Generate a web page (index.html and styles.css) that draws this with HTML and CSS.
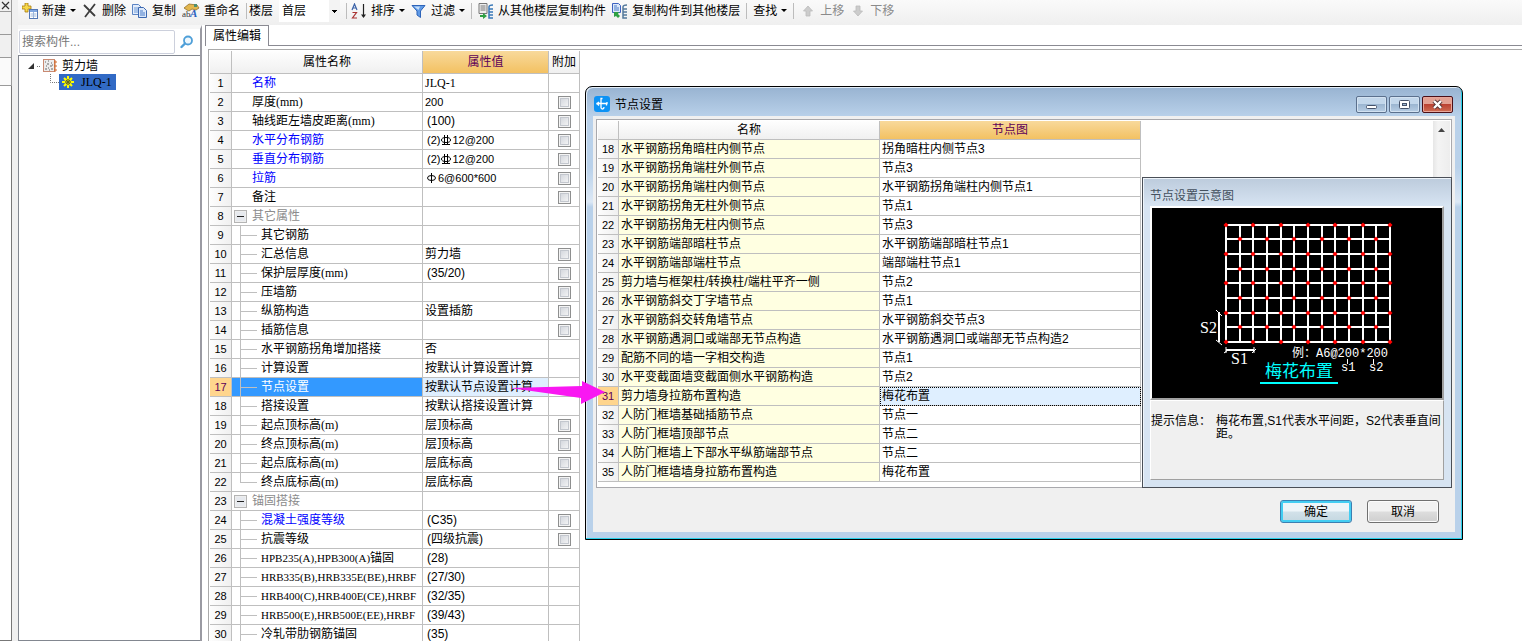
FILE: index.html
```html
<!DOCTYPE html>
<html lang="zh-CN">
<head>
<meta charset="utf-8">
<title>属性编辑</title>
<link rel="stylesheet" href="styles.css">
</head>
<body>
<div class="app">
  <aside class="strip">
    <button class="strip-close" aria-label="关闭"><svg width="9" height="9" viewBox="0 0 9 9"><path d="M1 1l7 7M8 1L1 8" stroke="#333" stroke-width="1.2"/></svg></button>
    <div class="strip-row"></div>
    <div class="strip-row"></div>
    <div class="strip-tab"></div>
    <div class="strip-body"></div>
  </aside>
  <div class="main">
    <div class="toolbar">
      <button class="tool"><svg width="16" height="16" viewBox="0 0 16 16"><path d="M3 0h3v3h3v3H6v3H3V6H0V3h3z" fill="#f6d84a" stroke="#a87b10" stroke-width=".8"/><rect x="7.5" y="6.500" width="8" height="9" fill="#fff" stroke="#5277b5"/><path d="M8 7h7v2H8z" fill="#7fa6e0"/><path d="M8.500 11h6M8.500 13h6M11.500 9v6" stroke="#9db7dc"/></svg><span>新建</span><i class="caret"></i></button>
      <button class="tool"><svg width="16" height="16" viewBox="0 0 16 16"><path d="M2 2l11 11M13 1L3 14" stroke="#3d3d3d" stroke-width="1.800" fill="none"/></svg><span>删除</span></button>
      <button class="tool"><svg width="16" height="16" viewBox="0 0 16 16"><path d="M.5 1.500h6l3 3v7h-9z" fill="#e3edfb" stroke="#5b84c4"/><path d="M2 5h4M2 7h5M2 9h5" stroke="#6f9bd8"/><path d="M6.500 4.500h5l3 3v7h-8z" fill="#dbe8fa" stroke="#3c68b0"/><path d="M8 8h3M8 10h5M8 12h5" stroke="#4b7cc8"/></svg><span>复制</span></button>
      <button class="tool"><svg width="18" height="16" viewBox="0 0 18 16"><path d="M2 5l5-4 8 1 2 3-3 2-4-1-3 2-2-1z" fill="#e3b74e" stroke="#94712a" stroke-width=".8"/><path d="M12 1h3v3h-3z" fill="#4f8f6e"/><text x="0" y="14" class="ico-ab">ab</text><text x="8" y="14" class="ico-a">A</text></svg><span>重命名</span></button>
      <i class="sep tight"></i>
      <label for="floor">楼层</label>
      <select id="floor" class="floor"><option>首层</option></select>
      <i class="sep"></i>
      <button class="tool sort"><svg width="16" height="16" viewBox="0 0 16 16"><path d="M1 7l2.500-6L6 7M2 5h3" fill="none" stroke="#3a62a8" stroke-width="1.200"/><path d="M1.500 9.500h4l-4 5.500h4.500" fill="none" stroke="#a33" stroke-width="1.200"/><path d="M12.500 1v13" stroke="#222" stroke-width="1.200"/><path d="M10 11.500h5L12.500 15z" fill="#222"/></svg><span>排序</span><i class="caret"></i></button>
      <button class="tool"><svg width="16" height="16" viewBox="0 0 16 16"><path d="M1 2.500h13L9.500 8v6.500L6 12V8z" fill="#5f9ae6" stroke="#2d63b8"/><path d="M3 3.500h6L7.500 7z" fill="#c5defa"/></svg><span>过滤</span><i class="caret"></i></button>
      <i class="sep"></i>
      <button class="tool"><svg width="16" height="16" viewBox="0 0 16 16"><path d="M1 .5h8v10H1z" fill="#eee" stroke="#777"/><path d="M2.500 3h5M2.500 5h5M2.500 7h5" stroke="#777"/><path d="M2 12h3v-2l4 3-4 3v-2H2z" fill="#2ea043"/><path d="M15 2c-4 0-4 2-4 2v11h4M11 6h4M11 9h4M11 12h4" fill="none" stroke="#3978b8" stroke-width="1.500"/></svg><span>从其他楼层复制构件</span></button>
      <button class="tool"><svg width="16" height="16" viewBox="0 0 16 16"><path d="M.5.5h6l2 2v7h-8z" fill="#dce8fa" stroke="#3d62c0"/><path d="M2 3h3M2 5h5M2 7h5" stroke="#4b7cc8"/><path d="M2 9v5l2-1 2 2 2-2-2-2 1-2z" fill="#2ea043"/><path d="M15 2c-4 0-4 2-4 2v11h4M11 6h4M11 9h4M11 12h4" fill="none" stroke="#54799c" stroke-width="1.500"/></svg><span>复制构件到其他楼层</span></button>
      <i class="sep"></i>
      <button class="tool"><span>查找</span><i class="caret"></i></button>
      <i class="sep"></i>
      <button class="tool off" disabled><svg width="16" height="16" viewBox="0 0 16 16"><path d="M8 3l4.500 5H10v5H6V8H3.500z" fill="#ccc" stroke="#bbb" stroke-width=".8"/></svg><span>上移</span></button>
      <button class="tool off" disabled><svg width="16" height="16" viewBox="0 0 16 16"><path d="M8 13L3.500 8H6V3h4v5h2.500z" fill="#ccc" stroke="#bbb" stroke-width=".8"/></svg><span>下移</span></button>
    </div>
    <div class="work">
      <section class="side">
        <div class="search">
          <input type="text" placeholder="搜索构件..." aria-label="搜索构件">
          <button aria-label="搜索"><svg width="14" height="14" viewBox="0 0 14 14"><circle cx="8" cy="5.500" r="4" fill="#eef7fd" stroke="#4f9fd8" stroke-width="1.800"/><path d="M5 8.500L1.500 12" stroke="#4f9fd8" stroke-width="2.400" stroke-linecap="round"/></svg></button>
        </div>
        <div class="tree">
          <div class="tree-row">
            <svg width="14" height="14" viewBox="0 0 14 14"><path d="M7 4v6H1z" fill="#333"/><path d="M10 7.500h4" stroke="#777" stroke-dasharray="1 1"/></svg>
            <svg width="14" height="14" viewBox="0 0 14 14"><rect x=".5" y=".5" width="11" height="12" fill="#ececec" stroke="#c98a72"/><path d="M2 3h1M5 2h1M4 5h2M8 4h1M3 7h1M7 7h2M2 10h2M5 9h1M8 10h2M6 11h1M9 6h1" stroke="#666"/><path d="M12 1v12M11 3h3M11 7h3M11 11h3" stroke="#d06a2c"/></svg>
            <span>剪力墙</span>
          </div>
          <div class="tree-row child">
            <svg width="10" height="16" viewBox="0 0 10 16"><path d="M1.500 0v8.500H10" fill="none" stroke="#777" stroke-dasharray="1 1"/></svg>
            <span class="picked"><svg width="12" height="12" viewBox="0 0 12 12"><path d="M6 0v12M0 6h12M2 2l8 8M10 2l-8 8" stroke="#ff0" stroke-width="2"/><circle cx="6" cy="6" r="3.500" fill="#ff0"/><circle cx="6" cy="6" r="2.200" fill="none" stroke="#333"/><circle cx="6" cy="6" r="1" fill="#333"/></svg>JLQ-1</span>
          </div>
        </div>
      </section>
      <section class="editor">
        <div class="tabs"><button class="tab">属性编辑</button></div>
        <div class="sheet">
          <table class="grid props">
            <colgroup><col class="c-num"><col class="c-name"><col class="c-val"><col class="c-add"></colgroup>
            <thead><tr><th></th><th>属性名称</th><th class="hot">属性值</th><th>附加</th></tr></thead>
            <tbody>
            <tr><th>1</th><td class="key">名称</td><td>JLQ-1</td><td></td></tr>
            <tr><th>2</th><td>厚度(mm)</td><td class="num">200</td><td><input type="checkbox" aria-label="附加 厚度"></td></tr>
            <tr><th>3</th><td>轴线距左墙皮距离(mm)</td><td class="in">(100)</td><td><input type="checkbox" aria-label="附加 轴线距左墙皮距离"></td></tr>
            <tr><th>4</th><td class="key">水平分布钢筋</td><td class="in rebar">(2)<svg class="bar" width="12" height="10" viewBox="0 0 12 10"><path d="M4.500 0v10M7.500 0v10M2 9.500h8" stroke="#000"/><ellipse cx="6" cy="5" rx="4.500" ry="2.500" fill="none" stroke="#000"/></svg>12@200</td><td><input type="checkbox" aria-label="附加 水平分布钢筋"></td></tr>
            <tr><th>5</th><td class="key">垂直分布钢筋</td><td class="in rebar">(2)<svg class="bar" width="12" height="10" viewBox="0 0 12 10"><path d="M4.500 0v10M7.500 0v10M2 9.500h8" stroke="#000"/><ellipse cx="6" cy="5" rx="4.500" ry="2.500" fill="none" stroke="#000"/></svg>12@200</td><td><input type="checkbox" aria-label="附加 垂直分布钢筋"></td></tr>
            <tr><th>6</th><td class="key">拉筋</td><td class="in rebar"><svg class="bar" width="11" height="10" viewBox="0 0 11 10"><path d="M4.500 0v10" stroke="#000"/><ellipse cx="4.500" cy="5" rx="4" ry="2.500" fill="none" stroke="#000"/></svg>6@600*600</td><td><input type="checkbox" aria-label="附加 拉筋"></td></tr>
            <tr><th>7</th><td>备注</td><td></td><td><input type="checkbox" aria-label="附加 备注"></td></tr>
            <tr><th>8</th><td class="group"><button class="fold" aria-label="折叠"></button>其它属性</td><td></td><td></td></tr>
            <tr><th>9</th><td class="leaf">其它钢筋</td><td></td><td></td></tr>
            <tr><th>10</th><td class="leaf">汇总信息</td><td>剪力墙</td><td><input type="checkbox" aria-label="附加 汇总信息"></td></tr>
            <tr><th>11</th><td class="leaf">保护层厚度(mm)</td><td class="in">(35/20)</td><td><input type="checkbox" aria-label="附加 保护层厚度"></td></tr>
            <tr><th>12</th><td class="leaf">压墙筋</td><td></td><td><input type="checkbox" aria-label="附加 压墙筋"></td></tr>
            <tr><th>13</th><td class="leaf">纵筋构造</td><td>设置插筋</td><td><input type="checkbox" aria-label="附加 纵筋构造"></td></tr>
            <tr><th>14</th><td class="leaf">插筋信息</td><td></td><td><input type="checkbox" aria-label="附加 插筋信息"></td></tr>
            <tr><th>15</th><td class="leaf">水平钢筋拐角增加搭接</td><td>否</td><td></td></tr>
            <tr><th>16</th><td class="leaf">计算设置</td><td>按默认计算设置计算</td><td></td></tr>
            <tr class="current"><th>17</th><td class="leaf">节点设置</td><td>按默认节点设置计算</td><td></td></tr>
            <tr><th>18</th><td class="leaf">搭接设置</td><td>按默认搭接设置计算</td><td></td></tr>
            <tr><th>19</th><td class="leaf">起点顶标高(m)</td><td>层顶标高</td><td><input type="checkbox" aria-label="附加 起点顶标高"></td></tr>
            <tr><th>20</th><td class="leaf">终点顶标高(m)</td><td>层顶标高</td><td><input type="checkbox" aria-label="附加 终点顶标高"></td></tr>
            <tr><th>21</th><td class="leaf">起点底标高(m)</td><td>层底标高</td><td><input type="checkbox" aria-label="附加 起点底标高"></td></tr>
            <tr><th>22</th><td class="leaf last">终点底标高(m)</td><td>层底标高</td><td><input type="checkbox" aria-label="附加 终点底标高"></td></tr>
            <tr><th>23</th><td class="group"><button class="fold" aria-label="折叠"></button>锚固搭接</td><td></td><td></td></tr>
            <tr><th>24</th><td class="leaf key">混凝土强度等级</td><td class="in">(C35)</td><td><input type="checkbox" aria-label="附加 混凝土强度等级"></td></tr>
            <tr><th>25</th><td class="leaf">抗震等级</td><td class="in">(四级抗震)</td><td><input type="checkbox" aria-label="附加 抗震等级"></td></tr>
            <tr><th>26</th><td class="leaf"><span class="code">HPB235(A),HPB300(A)</span>锚固</td><td class="in">(28)</td><td></td></tr>
            <tr><th>27</th><td class="leaf"><span class="code">HRB335(B),HRB335E(BE),HRBF</span></td><td class="in">(27/30)</td><td></td></tr>
            <tr><th>28</th><td class="leaf"><span class="code">HRB400(C),HRB400E(CE),HRBF</span></td><td class="in">(32/35)</td><td></td></tr>
            <tr><th>29</th><td class="leaf"><span class="code">HRB500(E),HRB500E(EE),HRBF</span></td><td class="in">(39/43)</td><td></td></tr>
            <tr><th>30</th><td class="leaf">冷轧带肋钢筋锚固</td><td class="in">(35)</td><td></td></tr>
            </tbody>
          </table>
        </div>
      </section>
    </div>
  </div>

  <div class="dialog" role="dialog" aria-label="节点设置">
    <div class="titlebar">
      <svg width="16" height="16" viewBox="0 0 16 16"><rect width="16" height="16" rx="3" fill="#0d92f4"/><path d="M8.500 2.500h-1.500v9q0 1.500 1.500 1.500t1.500-2M3 8.500V7.500h10v-1.500M12.500 7.500v2M5 6L3 7.500 5 9.500" fill="none" stroke="#fff" stroke-width="1.300"/></svg>
      <span class="title">节点设置</span>
      <button class="win" aria-label="最小化"><svg width="13" height="11" viewBox="0 0 13 11"><rect x="1.500" y="6.500" width="10" height="3" rx="1" fill="#fff" stroke="#46536b"/></svg></button>
      <button class="win" aria-label="最大化"><svg width="13" height="11" viewBox="0 0 13 11"><rect x="1.500" y="1.500" width="10" height="8" rx="1" fill="#fff" stroke="#46536b"/><rect x="4.500" y="4.500" width="4" height="2" fill="#9db7d2" stroke="#46536b"/></svg></button>
      <button class="win close" aria-label="关闭"><svg width="13" height="11" viewBox="0 0 13 11"><path d="M3 2l7 7M10 2L3 9" stroke="#533" stroke-width="4.200"/><path d="M3 2l7 7M10 2L3 9" stroke="#fff" stroke-width="2.400"/></svg></button>
    </div>
    <div class="client">
      <div class="list">
        <table class="grid nodes">
          <colgroup><col class="n-num"><col class="n-name"><col class="n-pic"></colgroup>
          <thead><tr><th></th><th>名称</th><th class="hot">节点图</th></tr></thead>
          <tbody>
          <tr><th>18</th><td>水平钢筋拐角暗柱内侧节点</td><td>拐角暗柱内侧节点3</td></tr>
          <tr><th>19</th><td>水平钢筋拐角端柱外侧节点</td><td>节点3</td></tr>
          <tr><th>20</th><td>水平钢筋拐角端柱内侧节点</td><td>水平钢筋拐角端柱内侧节点1</td></tr>
          <tr><th>21</th><td>水平钢筋拐角无柱外侧节点</td><td>节点1</td></tr>
          <tr><th>22</th><td>水平钢筋拐角无柱内侧节点</td><td>节点3</td></tr>
          <tr><th>23</th><td>水平钢筋端部暗柱节点</td><td>水平钢筋端部暗柱节点1</td></tr>
          <tr><th>24</th><td>水平钢筋端部端柱节点</td><td>端部端柱节点1</td></tr>
          <tr><th>25</th><td>剪力墙与框架柱/转换柱/端柱平齐一侧</td><td>节点2</td></tr>
          <tr><th>26</th><td>水平钢筋斜交丁字墙节点</td><td>节点1</td></tr>
          <tr><th>27</th><td>水平钢筋斜交转角墙节点</td><td>水平钢筋斜交节点3</td></tr>
          <tr><th>28</th><td>水平钢筋遇洞口或端部无节点构造</td><td>水平钢筋遇洞口或端部无节点构造2</td></tr>
          <tr><th>29</th><td>配筋不同的墙一字相交构造</td><td>节点1</td></tr>
          <tr><th>30</th><td>水平变截面墙变截面侧水平钢筋构造</td><td>节点2</td></tr>
          <tr class="current"><th>31</th><td>剪力墙身拉筋布置构造</td><td>梅花布置</td></tr>
          <tr><th>32</th><td>人防门框墙基础插筋节点</td><td>节点一</td></tr>
          <tr><th>33</th><td>人防门框墙顶部节点</td><td>节点二</td></tr>
          <tr><th>34</th><td>人防门框墙上下部水平纵筋端部节点</td><td>节点二</td></tr>
          <tr><th>35</th><td>人防门框墙墙身拉筋布置构造</td><td>梅花布置</td></tr>
          </tbody>
        </table>
        <div class="scroll"><svg width="7" height="4" viewBox="0 0 7 4"><path d="M3.500 0L7 4H0z" fill="#444"/></svg></div>
        <div class="preview">
          <h2>节点设置示意图</h2>
          <svg class="diagram" viewBox="0 0 290 190" width="290" height="190">
            <defs><path id="n" d="M-2.500 0L0-2.500 2.500 0 0 2.500z" fill="red"/>
              <g id="even"><use href="#n" x="74"/><use href="#n" x="101"/><use href="#n" x="129"/><use href="#n" x="156"/><use href="#n" x="183"/><use href="#n" x="211"/><use href="#n" x="238"/></g>
              <g id="odd"><use href="#n" x="88"/><use href="#n" x="115"/><use href="#n" x="142"/><use href="#n" x="170"/><use href="#n" x="197"/><use href="#n" x="224"/></g></defs>
            <rect width="290" height="190"/>
            <path d="M74 17v117M88 17v117M101 17v117M115 17v117M129 17v117M142 17v117M156 17v117M170 17v117M183 17v117M197 17v117M211 17v117M224 17v117M238 17v117M73 17h166M73 31h166M73 46h166M73 61h166M73 75h166M73 90h166M73 105h166M73 119h166M73 134h166" stroke="#fff" stroke-width="2"/>
            <use href="#even" y="17"/><use href="#odd" y="31"/><use href="#even" y="46"/><use href="#odd" y="61"/><use href="#even" y="75"/><use href="#odd" y="90"/><use href="#even" y="105"/><use href="#odd" y="119"/><use href="#even" y="134"/>
            <path d="M67 104v30M74 142h28" stroke="#fff" stroke-width="2"/>
            <path d="M64 102l6 6M64 132l6 5M74 139v6M72 145l4-3M102 139v6M100 145l4-4M195.500 151v5M221.500 151v5" stroke="#fff"/>
            <text x="48" y="125" class="dim">S2</text>
            <text x="79" y="156" class="dim">S1</text>
            <text x="140" y="149" class="note">例：</text>
            <text x="164" y="149" class="note">A6@200*200</text>
            <text x="189" y="163" class="note">s1</text>
            <text x="217" y="163" class="note">s2</text>
            <text x="113" y="169" class="name">梅花布置</text>
            <path d="M108 175h78" stroke="#0ff" stroke-width="2"/>
          </svg>
          <dl class="hint"><dt>提示信息：</dt><dd>梅花布置,S1代表水平间距，S2代表垂直间距。</dd></dl>
        </div>
      </div>
      <div class="actions"><button class="btn ok">确定</button><button class="btn">取消</button></div>
    </div>
  </div>
  <svg class="pointer" width="96" height="24" viewBox="0 0 96 24"><path d="M0 7l72-2V0l23 11-24 12v-6z" fill="#f917f2"/></svg>
</div>
</body>
</html>
```
FILE: styles.css
```css
* { box-sizing: border-box; }
body {
  margin: 0;
  background: #fff;
  color: #000;
  font: 12px/18px "Liberation Sans", "Noto Sans CJK SC", sans-serif;
}
button, input, select { font: inherit; color: inherit; margin: 0; padding: 0; }
button { background: none; border: 0; white-space: nowrap; }
svg { display: block; flex: none; }

.app { position: relative; display: flex; height: 100vh; overflow: hidden; }

/* collapsed dock on the left */
.strip { display: flex; flex-direction: column; width: 18px; background: #f0f0f0; flex: none; }
.strip > * { width: 12px; border-right: 1px solid #9a9a9a; border-bottom: 1px solid #9a9a9a; }
.strip-close { height: 12px; display: flex; align-items: center; justify-content: center; }
.strip-row { height: 23px; }
.strip-tab { height: 28px; background: #fafafa; }
.strip-body { flex: 1; background: #fff; border-color: #777; }

.main { flex: 1; min-width: 0; display: flex; flex-direction: column; }

/* toolbar */
.toolbar {
  display: flex; align-items: center; gap: 6px;
  height: 25px; padding: 0 4px 4px; flex: none;
  background: linear-gradient(#fafafa, #efefef);
}
.tool { display: flex; align-items: center; gap: 4px; flex: none; }
.tool.sort { margin-left: -2px; }
.toolbar label { flex: none; }
.tool.off { color: #8a8a8a; }
.caret { border: 3px solid transparent; border-top-color: #000; border-bottom: 0; }
.sep { width: 1px; height: 16px; background: #bcbcbc; flex: none; }
.sep.tight { margin-right: -4px; }
.floor {
  appearance: none; width: 61px; height: 22px; padding: 0 3px; border: 0; border-radius: 0; flex: none;
  background:
    linear-gradient(#000, #000) 53px 10px / 5px 1px no-repeat,
    linear-gradient(#000, #000) 54px 11px / 3px 1px no-repeat,
    linear-gradient(#000, #000) 55px 12px / 1px 1px no-repeat,
    linear-gradient(#f3f3f3, #f3f3f3) right / 11px 100% no-repeat, #fff;
}
.ico-ab { font: 9px "Liberation Serif", serif; fill: #333; }
.ico-a { font: italic bold 11px "Liberation Serif", serif; fill: #2b62c0; }

/* component list */
.work { flex: 1; display: flex; min-height: 0; }
.side { width: 184px; display: flex; flex-direction: column; border-right: 2px solid #9a9aa2; background: #fff; flex: none; border-top: 4px solid #f6f6f6; }
.search { display: flex; align-items: center; height: 26px; padding: 1px; gap: 5px; flex: none; }
.search input { flex: 1; min-width: 0; height: 24px; padding: 0 2px; border: 1px solid #ccd0dc; border-radius: 2px; background: #fff; }
.search input::placeholder { color: #777; opacity: 1; }
.search button { width: 19px; }
.tree { flex: 1; border: 1px solid #828790; border-right: 0; padding: 2px 8px; font-family: "Liberation Serif", "Noto Sans CJK SC", serif; }
.tree-row { display: flex; align-items: center; gap: 2px; height: 16px; }
.tree-row span { padding-left: 3px; }
.tree-row.child { padding-left: 22px; gap: 0; }
.tree-row .picked { display: flex; align-items: center; gap: 7px; height: 16px; padding: 0 4px 0 3px; background: #316ac5; }

/* property editor */
.editor { flex: 1; min-width: 0; display: flex; flex-direction: column; padding-left: 3px; }
.tabs { border-bottom: 1px solid #8a8a92; height: 21px; flex: none; }
.tab { height: 21px; padding: 0 7px; background: #fff; border: 1px solid #8a8a92; border-bottom: 0; }
.sheet { flex: 1; min-height: 0; margin: 3px 0 0 3px; padding: 1px; border-top: 1px solid #aaa; border-left: 1px solid #aaa; }

.grid { border-spacing: 0; table-layout: fixed; flex: none; }
.grid td, .grid th {
  height: 19px; padding: 1px 2px 0; line-height: 17px; font-weight: normal;
  border-right: 1px solid #bfbfbf; border-bottom: 1px solid #bfbfbf;
  white-space: nowrap; overflow: hidden; text-align: left; vertical-align: middle;
}
.grid th { padding: 0; text-align: center; background: linear-gradient(to right, #fdfdfd, #f0f0f0); }
.grid thead th { background: linear-gradient(#fefefe, #f0f0f0); }
.grid thead .hot { background: linear-gradient(#f8d99b, #f3c162); color: #5c0058; }
.grid .current th { background: #ffd58d; color: #5c0058; }
.grid tbody th { font: 11px/17px "Liberation Sans", sans-serif; }

.props { width: 370px; font-family: "Liberation Serif", "Noto Sans CJK SC", serif; }
.props thead th { height: 23px; }
.c-num { width: 22px; } .c-name { width: 191px; } .c-val { width: 126px; } .c-add { width: 31px; }
.props td:nth-child(2) { padding-left: 20px; }
.props td.in { padding-left: 4px; font-family: "Liberation Sans", "Noto Sans CJK SC", sans-serif; }
.props td.num, .props td.rebar { font-family: "Liberation Sans", sans-serif; font-size: 11px; }
.props td:last-child { padding: 0; text-align: center; }
.props td.key { color: #00f; }
.props td.group { color: #8c8c8c; padding-left: 2px; }
.props td.leaf {
  padding-left: 29px;
  background:
    linear-gradient(#bfbfbf, #bfbfbf) 8px 0 / 1px 100% no-repeat,
    linear-gradient(#bfbfbf, #bfbfbf) 8px 9px / 17px 1px no-repeat;
}
.props td.leaf.last {
  background:
    linear-gradient(#bfbfbf, #bfbfbf) 8px 0 / 1px 9px no-repeat,
    linear-gradient(#bfbfbf, #bfbfbf) 8px 9px / 17px 1px no-repeat;
}
.props .current td.leaf { background-color: #3399ff; color: #fff; }
.props .current td:nth-child(3) { background: #dfefff; }
.code { font-size: 11px; }
.bar { display: inline-block; vertical-align: -1px; }
.fold {
  display: inline-block; width: 13px; height: 13px; margin-right: 5px; vertical-align: -2px;
  border: 1px solid #b4b4b4; outline: 1px solid #eee; outline-offset: -2px;
  background: linear-gradient(#222, #222) center / 7px 1px no-repeat, #e6e9ee;
}
input[type="checkbox"] {
  appearance: none; display: block; width: 13px; height: 13px; margin: 0 auto;
  border: 1px solid #8e8f8f; box-shadow: inset 0 0 0 1px #f4f4f4, inset 0 0 0 2px #c3c7ce;
  background: linear-gradient(135deg, #cdd1d8, #fafafa);
}

/* node settings window */
.dialog {
  position: absolute; left: 585px; top: 86px; width: 878px;
  padding: 1px 7px 7px; border: 1px solid #000; border-radius: 7px 7px 0 0;
  background: linear-gradient(#98b3d1, #b9d1ea 30px, #b9d1ea 80px, #dce8f5 115px, #b9d1ea 120px);
  box-shadow: inset -1px -1px 0 #28d0ea, inset 1px 1px 0 #e4eef8;
}
.titlebar { display: flex; align-items: flex-start; height: 28px; padding: 8px 2px 0 1px; gap: 2px; }
.title { flex: 1; padding-left: 3px; }
.win {
  display: flex; align-items: center; justify-content: center;
  width: 31px; height: 17px; border: 1px solid #5b708d; border-radius: 2px;
  box-shadow: inset 0 0 0 1px #d3e2f1;
  background: linear-gradient(#c3d7eb 45%, #9cb6d1 50%, #b7cde4);
}
.win.close { border-color: #4b0f17; box-shadow: inset 0 0 0 1px #e8a79b; background: linear-gradient(#e3a193 45%, #bb4232 50%, #cf6d53); }
.client { background: #f0f0f0; padding: 3px; }
.list { position: relative; display: flex; justify-content: space-between; border: 1px solid #a9a9ad; background: #fff; padding: 1px 1px 5px; }
.nodes { width: 543px; }
.n-num { width: 21px; } .n-name { width: 261px; } .n-pic { width: 261px; }
.nodes td:nth-child(2) { background: #ffffe1; }
.nodes .current td:last-child { background: #dfefff; outline: 1px dotted #000; outline-offset: -1px; }
.scroll { width: 17px; background: linear-gradient(to right, #e6e6e6, #f4f4f4 30%, #ededed); display: flex; justify-content: center; padding-top: 7px; }

.preview {
  position: absolute; right: -1px; bottom: -1px; width: 310px; padding: 8px 7px 7px;
  border: 1px solid #4a4f57; box-shadow: inset 1px 1px 0 #eef4fa;
  background: linear-gradient(#bccbdc, #d7e4f2 28px);
}
.preview h2 { margin: 0; font-size: 12px; line-height: 20px; font-weight: normal; color: #44505e; }
.diagram { box-sizing: content-box; border: 2px solid #fff; border-right-color: #a0a0a0; border-bottom-color: #a0a0a0; }
.dim { font: 16px "Liberation Serif", serif; fill: #fff; }
.note { font: 12px "Liberation Mono", "Noto Sans CJK SC", monospace; fill: #fff; }
.name { font: 17px "Liberation Sans", "Noto Sans CJK SC", sans-serif; fill: #0ff; }
.hint {
  display: flex; margin: 0; height: 80px; padding-top: 14px; line-height: 13px; background: #f0f0f0;
  border: 1px solid #fff; border-right-color: #a0a0a0; border-bottom-color: #a0a0a0;
}
.hint dt { width: 65px; flex: none; }
.hint dd { margin: 0; }
.actions { display: flex; justify-content: flex-end; gap: 15px; padding: 12px 13px 6px 0; }
.btn { width: 72px; height: 23px; border: 1px solid #707070; border-radius: 3px; box-shadow: inset 0 0 0 1px #fcfcfc; background: linear-gradient(#f2f2f2 48%, #dddddd 52%, #cfcfcf); }
.btn.ok { border-color: #3c7fb1; box-shadow: inset 0 0 0 2px #43cdf2; background: linear-gradient(#eef5f9 48%, #d2e1e9 52%, #c4d7e0); }

/* callout from the property row to the node row */
.pointer { position: absolute; left: 510px; top: 381px; }
```
